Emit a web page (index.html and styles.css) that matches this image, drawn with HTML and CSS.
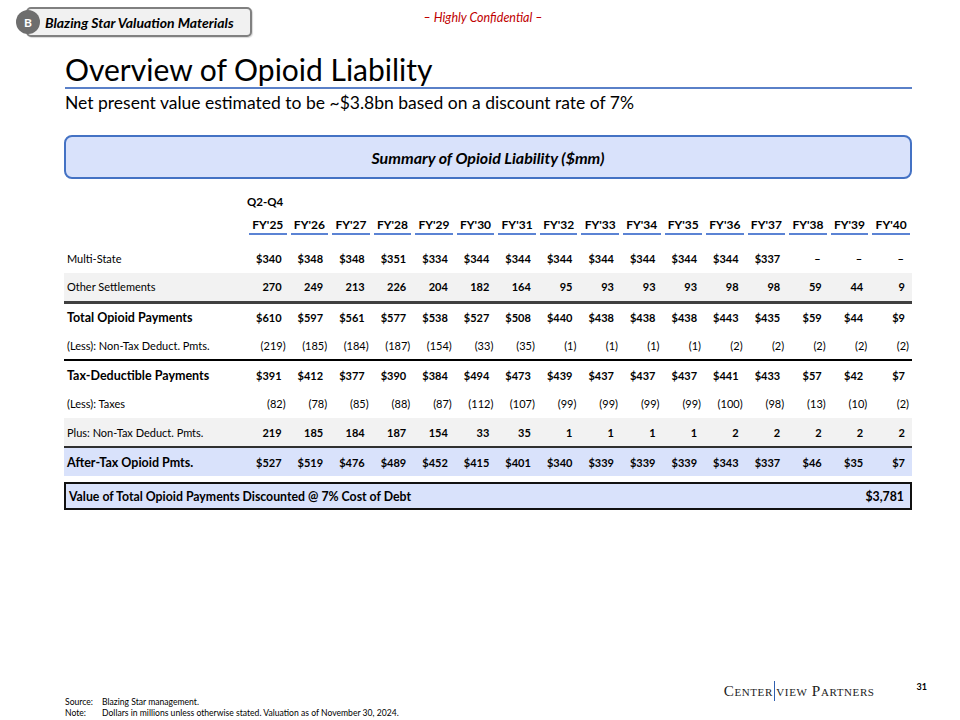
FILE: index.html
```html
<!DOCTYPE html>
<html>
<head>
<meta charset="utf-8">
<link rel="stylesheet" href="styles.css">
</head>
<body>
<div class="page">
  <div class="topbar">
    <div class="badge">
      <span class="badge-dot">B</span>
      <span class="badge-text">Blazing Star Valuation Materials</span>
    </div>
    <div class="confidential">– Highly Confidential –</div>
    <div></div>
  </div>

  <h1 class="title">Overview of Opioid Liability</h1>
  <p class="subtitle">Net present value estimated to be ~$3.8bn based on a discount rate of 7%</p>

  <div class="summary">Summary of Opioid Liability ($mm)</div>

  <table class="fin">
    <colgroup>
      <col class="c-label">
      <col span="16" class="c-num">
    </colgroup>
    <thead>
      <tr class="pre"><th></th><th class="q">Q2-Q4</th><th colspan="15"></th></tr>
      <tr class="years">
        <th></th>
        <th><span>FY'25</span></th><th><span>FY'26</span></th><th><span>FY'27</span></th><th><span>FY'28</span></th>
        <th><span>FY'29</span></th><th><span>FY'30</span></th><th><span>FY'31</span></th><th><span>FY'32</span></th>
        <th><span>FY'33</span></th><th><span>FY'34</span></th><th><span>FY'35</span></th><th><span>FY'36</span></th>
        <th><span>FY'37</span></th><th><span>FY'38</span></th><th><span>FY'39</span></th><th><span>FY'40</span></th>
      </tr>
    </thead>
    <tbody>
      <tr class="b">
        <td class="lbl">Multi-State</td>
        <td>$340</td><td>$348</td><td>$348</td><td>$351</td><td>$334</td><td>$344</td><td>$344</td><td>$344</td>
        <td>$344</td><td>$344</td><td>$344</td><td>$344</td><td>$337</td><td class="dash">–</td><td class="dash">–</td><td class="dash">–</td>
      </tr>
      <tr class="b shade rule-thick">
        <td class="lbl">Other Settlements</td>
        <td>270</td><td>249</td><td>213</td><td>226</td><td>204</td><td>182</td><td>164</td><td>95</td>
        <td>93</td><td>93</td><td>93</td><td>98</td><td>98</td><td>59</td><td>44</td><td>9</td>
      </tr>
      <tr class="b">
        <td class="lbl strong">Total Opioid Payments</td>
        <td>$610</td><td>$597</td><td>$561</td><td>$577</td><td>$538</td><td>$527</td><td>$508</td><td>$440</td>
        <td>$438</td><td>$438</td><td>$438</td><td>$443</td><td>$435</td><td>$59</td><td>$44</td><td>$9</td>
      </tr>
      <tr class="n rule-black">
        <td class="lbl">(Less): Non-Tax Deduct. Pmts.</td>
        <td class="neg">(219)</td><td class="neg">(185)</td><td class="neg">(184)</td><td class="neg">(187)</td><td class="neg">(154)</td><td class="neg">(33)</td><td class="neg">(35)</td><td class="neg">(1)</td>
        <td class="neg">(1)</td><td class="neg">(1)</td><td class="neg">(1)</td><td class="neg">(2)</td><td class="neg">(2)</td><td class="neg">(2)</td><td class="neg">(2)</td><td class="neg">(2)</td>
      </tr>
      <tr class="b">
        <td class="lbl strong">Tax-Deductible Payments</td>
        <td>$391</td><td>$412</td><td>$377</td><td>$390</td><td>$384</td><td>$494</td><td>$473</td><td>$439</td>
        <td>$437</td><td>$437</td><td>$437</td><td>$441</td><td>$433</td><td>$57</td><td>$42</td><td>$7</td>
      </tr>
      <tr class="n">
        <td class="lbl">(Less): Taxes</td>
        <td class="neg">(82)</td><td class="neg">(78)</td><td class="neg">(85)</td><td class="neg">(88)</td><td class="neg">(87)</td><td class="neg">(112)</td><td class="neg">(107)</td><td class="neg">(99)</td>
        <td class="neg">(99)</td><td class="neg">(99)</td><td class="neg">(99)</td><td class="neg">(100)</td><td class="neg">(98)</td><td class="neg">(13)</td><td class="neg">(10)</td><td class="neg">(2)</td>
      </tr>
      <tr class="b shade rule-dark">
        <td class="lbl">Plus: Non-Tax Deduct. Pmts.</td>
        <td>219</td><td>185</td><td>184</td><td>187</td><td>154</td><td>33</td><td>35</td><td>1</td>
        <td>1</td><td>1</td><td>1</td><td>2</td><td>2</td><td>2</td><td>2</td><td>2</td>
      </tr>
      <tr class="b blue">
        <td class="lbl strong">After-Tax Opioid Pmts.</td>
        <td>$527</td><td>$519</td><td>$476</td><td>$489</td><td>$452</td><td>$415</td><td>$401</td><td>$340</td>
        <td>$339</td><td>$339</td><td>$339</td><td>$343</td><td>$337</td><td>$46</td><td>$35</td><td>$7</td>
      </tr>
    </tbody>
  </table>

  <div class="valuebox">
    <span>Value of Total Opioid Payments Discounted @ 7% Cost of Debt</span>
    <span>$3,781</span>
  </div>

  <div class="footer">
    <div class="notes">
      <div class="note"><span class="nk">Source:</span><span>Blazing Star management.</span></div>
      <div class="note"><span class="nk">Note:</span><span>Dollars in millions unless otherwise stated. Valuation as of November 30, 2024.</span></div>
    </div>
    <div class="brand">
      <span class="logo">Center<span class="bar"></span>view Partners</span>
      <span class="pnum">31</span>
    </div>
  </div>
</div>
</body>
</html>
```

FILE: styles.css
```css
* { box-sizing: border-box; }
html, body { margin: 0; padding: 0; background: #fff; }
body {
  font-family: "Lato", "Noto Sans", sans-serif;
  color: #000;
}
.page {
  width: 960px;
  height: 720px;
  display: flex;
  flex-direction: column;
  padding: 7px 48px 0 64px;
}
.topbar {
  display: grid;
  grid-template-columns: 1fr auto 1fr;
  align-items: start;
  margin-left: -50px;
  height: 30px;
}
.badge {
  display: flex;
  align-items: center;
  width: 238px;
  height: 30px;
}
.badge-dot {
  width: 24px;
  height: 24px;
  border-radius: 50%;
  background: #6e6e6e;
  color: #fff;
  font-weight: 700;
  font-size: 12px;
  display: flex;
  align-items: center;
  justify-content: center;
  position: relative;
  z-index: 1;
  flex: none;
  margin-left: 2px;
}
.badge-text {
  margin-left: -14px;
  flex: 1;
  height: 30px;
  border: 2px solid #808080;
  border-radius: 5px;
  background: #f1f1f1;
  font-weight: 700;
  font-style: italic;
  font-size: 14px;
  display: flex;
  align-items: center;
  padding-left: 17px;
  box-shadow: 1px 1px 1px rgba(0,0,0,0.15);
}
.confidential {
  color: #c00000;
  font-style: italic;
  font-size: 12.5px;
  padding-top: 3px;
  margin-left: 40px;
}
.title {
  margin: 14px 0 0 1px;
  font-weight: 400;
  font-size: 30px;
  line-height: 36px;
  border-bottom: 2px solid #5a80c8;
}
.subtitle {
  margin: 2px 0 0 1px;
  font-size: 17.5px;
  line-height: 24px;
}
.summary {
  margin-top: 20px;
  height: 44px;
  border: 2px solid #4472c4;
  border-radius: 8px;
  background: #d9e2fb;
  display: flex;
  align-items: center;
  justify-content: center;
  font-weight: 700;
  font-style: italic;
  font-size: 16px;
}
.fin {
  margin-top: 10px;
  border-collapse: collapse;
  table-layout: fixed;
  width: 848px;
  font-size: 11px;
}
.c-label { width: 183px; }
.c-num { width: 41.56px; }
.fin th, .fin td {
  padding: 0;
  white-space: nowrap;
}
.pre th { height: 24px; text-align: left; font-weight: 700; vertical-align: middle; font-size: 11.5px; }
.years th {
  height: 31px;
  font-weight: 700;
  font-size: 12px;
  vertical-align: top;
  text-align: center;
  padding: 0 2px;
}
.years th span {
  display: block;
  border-bottom: 2px solid #5b83d4;
  padding-top: 4px;
  height: 22px;
}
.years th:first-child { padding: 0; }
.fin tbody td {
  height: 29px;
  text-align: right;
  padding-right: 7px;
  vertical-align: middle;
}
.fin tbody td.neg { padding-right: 3px; }
.fin tbody td.dash { padding-right: 8px; }
.fin tbody td.lbl {
  text-align: left;
  padding-left: 3px;
  padding-right: 0;
}
.fin tbody tr.b td { font-weight: 700; }
.fin tbody tr.b td.lbl { font-weight: 400; }
.fin tbody tr.b td.lbl.strong { font-weight: 700; font-size: 12.5px; }
.fin tbody tr.n td { font-weight: 400; }
.fin tr.shade td { background: #f2f2f2; }
.fin tr.blue td { background: #d9e2fb; }
.fin tr.rule-thick td { border-bottom: 3px solid #404040; }
.fin tr.rule-black td { border-bottom: 2px solid #000; }
.fin tr.rule-dark td { border-bottom: 2px solid #303030; }
.valuebox {
  margin-top: 6px;
  height: 28px;
  border: 2px solid #111;
  background: #d9e2fb;
  display: flex;
  align-items: center;
  justify-content: space-between;
  padding: 0 6px 0 3px;
  font-weight: 700;
  font-size: 12.3px;
  width: 848px;
}
.footer {
  margin-top: auto;
  display: flex;
  justify-content: space-between;
  align-items: flex-end;
  padding-bottom: 1px;
}
.notes {
  font-size: 8.6px;
  line-height: 11px;
  margin-left: 1px;
}
.note { display: flex; }
.nk { width: 37px; flex: none; }
.brand {
  display: flex;
  align-items: flex-start;
  margin-bottom: 18px;
  margin-right: -15px;
}
.logo {
  font-family: "Liberation Serif", "DejaVu Serif", serif;
  font-variant: small-caps;
  font-size: 15.2px;
  letter-spacing: 0.6px;
  color: #222;
  display: flex;
  align-items: center;
}
.bar {
  display: inline-block;
  width: 1.5px;
  height: 20px;
  background: #2f5fb0;
  margin: 0 1px;
}
.pnum {
  font-size: 9px;
  font-weight: 700;
  margin-left: 42px;
  margin-top: 0;
}
```
